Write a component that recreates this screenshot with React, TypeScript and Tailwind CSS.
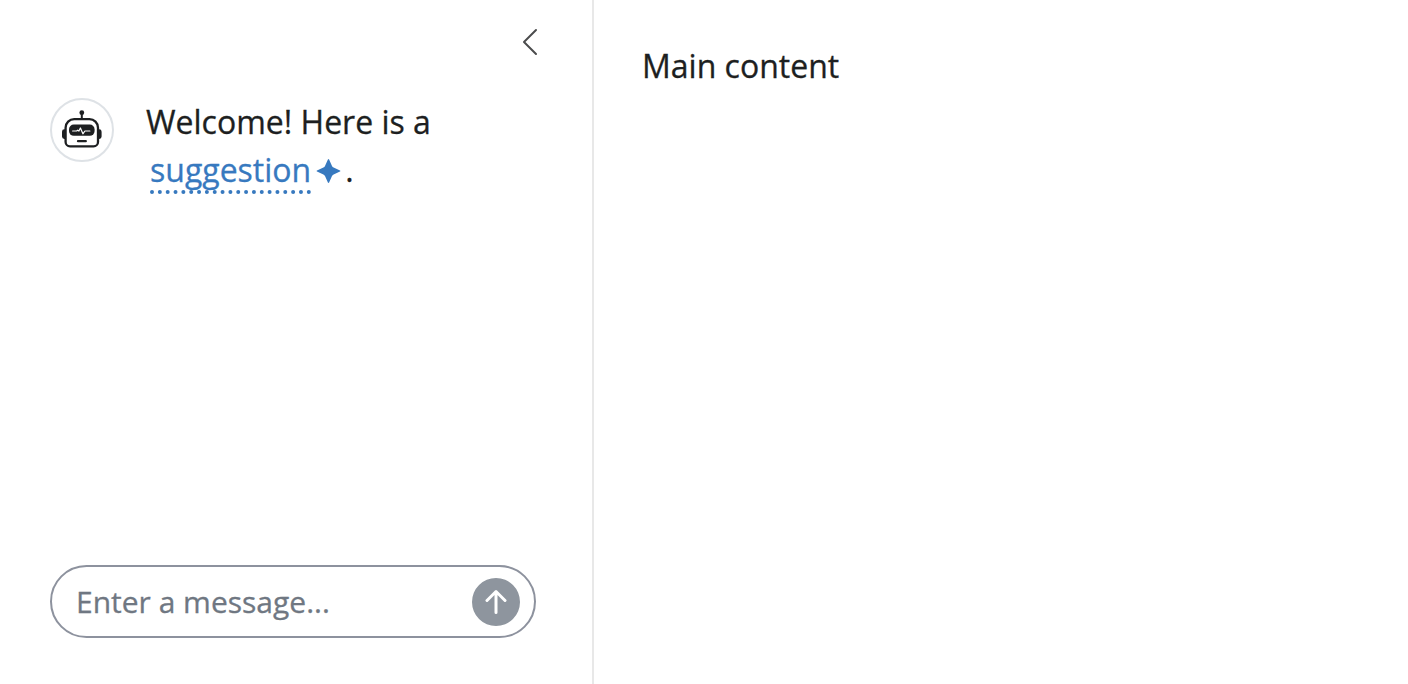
function RobotIcon() {
  return (
    <svg className="-mt-[3px]" width="40" height="38" viewBox="0 0 40 38" fill="none" aria-hidden="true">
      <circle cx="19.8" cy="2.7" r="2.4" fill="#1d1f21" />
      <path d="M19.8 3v6" stroke="#1d1f21" strokeWidth="2" />
      <path d="M12.2 9.1h15.2a8.6 8.6 0 0 1 8.6 8.6v14.2a4.4 4.4 0 0 1-4.4 4.4H8a4.4 4.4 0 0 1-4.4-4.4V17.7a8.6 8.6 0 0 1 8.6-8.6z" stroke="#1d1f21" strokeWidth="2.3" />
      <path d="M3 19.3H2.4A2.4 2.4 0 0 0 0 21.7v4.8a2.4 2.4 0 0 0 2.4 2.4H3zM36.6 19.3h.6a2.4 2.4 0 0 1 2.4 2.4v4.8a2.4 2.4 0 0 1-2.4 2.4h-.6z" fill="#1d1f21" />
      <rect x="7" y="14.6" width="25.6" height="11.2" rx="4.8" fill="#1d1f21" />
      <path d="M10.6 21h4l1.1-.8 1.2.9 1.5-3.1 2.5 5.8 2-2.8h5" stroke="white" strokeWidth="1.2" strokeLinecap="round" strokeLinejoin="round" />
      <path d="M16 31.2h7.8" stroke="#1d1f21" strokeWidth="2.3" strokeLinecap="round" />
    </svg>
  );
}

function StarIcon() {
  return (
    <svg className="ml-[5px] inline-block align-[-1px]" width="25" height="24" viewBox="0 0 25 24" fill="#3779bf" aria-hidden="true">
      <path d="M11.9.5a.65.65 0 0 1 1.2 0L16 6.9a3 3 0 0 0 1.6 1.6L24 11.4a.65.65 0 0 1 0 1.2L17.6 15.5a3 3 0 0 0-1.6 1.6L13.1 23.5a.65.65 0 0 1-1.2 0L9 17.1a3 3 0 0 0-1.6-1.6L1 12.6a.65.65 0 0 1 0-1.2L7.4 8.5a3 3 0 0 0 1.6-1.6z" />
    </svg>
  );
}

function ChevronLeft() {
  return (
    <svg width="32" height="32" viewBox="0 0 16 16" fill="#4b4c4d" aria-hidden="true">
      <path fillRule="evenodd" d="M11.354 1.646a.5.5 0 0 1 0 .708L5.707 8l5.647 5.646a.5.5 0 0 1-.708.708l-6-6a.5.5 0 0 1 0-.708l6-6a.5.5 0 0 1 .708 0" />
    </svg>
  );
}

function SendIcon() {
  return (
    <svg width="48" height="48" viewBox="0 0 16 16" fill="#8e959e" aria-hidden="true">
      <path d="M16 8A8 8 0 1 0 0 8a8 8 0 0 0 16 0m-7.5 3.5a.5.5 0 0 1-1 0V5.707L5.354 7.854a.5.5 0 1 1-.708-.708l3-3a.5.5 0 0 1 .708 0l3 3a.5.5 0 0 1-.708.708L8.5 5.707z" />
    </svg>
  );
}

export default function App() {
  return (
    <div className="flex h-screen overflow-hidden bg-white font-['Open_Sans',sans-serif] text-[32px] leading-[48px] text-[#1d1f21] [-webkit-text-stroke-width:0.3px]">
      <aside className="flex w-[594px] shrink-0 flex-col border-r-2 border-[#e8e8e8] pb-[46px] pl-[50px] pr-[46px] pt-[26px]">
        <button className="self-end" aria-label="Toggle sidebar">
          <ChevronLeft />
        </button>
        <div className="mt-10 flex items-start gap-8">
          <div className="flex size-16 shrink-0 items-center justify-center rounded-full border-2 border-[#dee2e6]">
            <RobotIcon />
          </div>
          <p className="flex-1">
            Welcome! Here is a
            <br />
            <span className="ml-1 cursor-pointer text-[#3779bf]">
              <span className="underline decoration-dotted decoration-[4px] underline-offset-[8px] [text-decoration-skip-ink:none]">suggestion</span>
              <StarIcon />
            </span>
            <span className="ml-1">.</span>
          </p>
        </div>
        <form className="mr-[10px] mt-auto flex h-[73px] items-center justify-between rounded-full border-2 border-[#8d929e] pl-6 pr-[14px]">
          <input
            className="w-[370px] bg-transparent text-[30px] leading-[45px] outline-none placeholder:text-[#6f7782]"
            placeholder="Enter a message..."
            aria-label="Message"
          />
          <button type="button" aria-label="Send message">
            <SendIcon />
          </button>
        </form>
      </aside>
      <main className="flex-1 px-12 pt-[42px]">Main content</main>
    </div>
  );
}
